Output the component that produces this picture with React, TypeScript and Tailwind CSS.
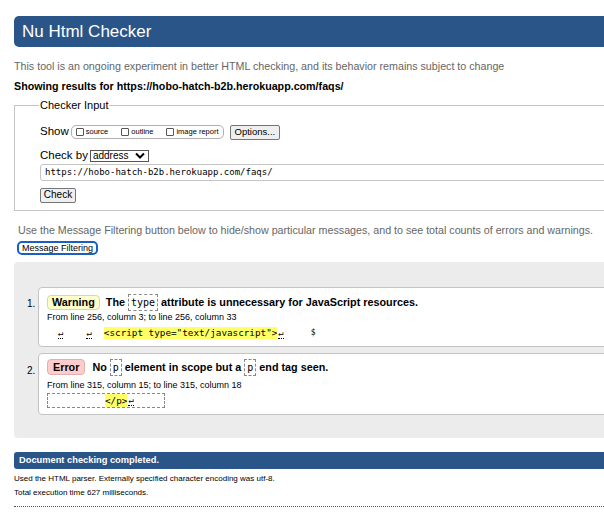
import React from "react";

const Ret = () => (
  <span className="inline-block border-b border-dotted border-black leading-[10px] text-[9px] mx-[1px]">↵</span>
);

const mono = { fontFamily: '"DejaVu Sans Mono", monospace' };

export default function App() {
  return (
    <div className="w-[604px] h-[513px] overflow-hidden bg-white" style={{ fontFamily: '"Liberation Sans", Arial, sans-serif' }}>
      <div className="w-[660px] pl-[14px] pt-[16px]">
        {/* Header */}
        <div className="h-[31px] bg-[#2a5589] rounded-l-[5px] flex items-center pl-[8px]">
          <h1 className="text-white text-[17px] leading-none">Nu Html Checker</h1>
        </div>

        <p className="mt-[12px] text-[10.7px] leading-[14px] text-[#666]">
          This tool is an ongoing experiment in better HTML checking, and its behavior remains subject to change
        </p>
        <p className="mt-[6px] text-[10.7px] leading-[14px] font-bold text-black">
          Showing results for https://hobo-hatch-b2b.herokuapp.com/faqs/
        </p>

        {/* Fieldset */}
        <fieldset className="mt-[5px] border border-[#c4c4c4] pl-[25px] pb-[12px] pt-[2px] h-[113px]">
          <legend className="text-[11px] leading-[14px] px-[1px] ml-[-1px] text-black">Checker Input</legend>
          <div className="flex items-center mt-[10px] h-[16px]">
            <span className="text-[11.5px] text-black">Show</span>
            <div className="ml-[2px] flex items-center h-[14px] border border-[#b0b0b0] rounded-[5px] px-[4px] gap-[13px] text-[7.5px] text-black">
              <span className="flex items-center gap-[2px]">
                <span className="inline-block w-[8px] h-[8px] border border-[#555] rounded-[1px]" />source
              </span>
              <span className="flex items-center gap-[2px]">
                <span className="inline-block w-[8px] h-[8px] border border-[#555] rounded-[1px]" />outline
              </span>
              <span className="flex items-center gap-[2px]">
                <span className="inline-block w-[8px] h-[8px] border border-[#555] rounded-[1px]" />image report
              </span>
            </div>
            <button className="ml-[6px] h-[15px] px-[4px] text-[9.5px] leading-none border border-[#767676] bg-[#efefef] rounded-[2px] text-black">
              Options...
            </button>
          </div>
          <div className="flex items-center mt-[9px] h-[13px]">
            <span className="text-[11.5px] text-black">Check by</span>
            <div className="ml-[2px] w-[59px] h-[12px] border border-[#555] flex items-center justify-between pl-[2px] pr-[3px] text-[10px] leading-none text-black">
              address
              <svg width="10" height="7" viewBox="0 0 10 7">
                <path d="M1 1.5 L5 5.5 L9 1.5" fill="none" stroke="black" strokeWidth="2" />
              </svg>
            </div>
          </div>
          <div className="mt-[2px] h-[17px] border border-[#c4c4c4] rounded-l-[3px] flex items-center pl-[4px] text-[9px] text-black" style={mono}>
            https://hobo-hatch-b2b.herokuapp.com/faqs/
          </div>
          <button className="mt-[3px] h-[15px] w-[36px] text-[10px] leading-none border border-[#767676] bg-[#efefef] rounded-[2px] text-black">
            Check
          </button>
        </fieldset>

        <p className="mt-[12px] ml-[4px] text-[10.7px] leading-[14px] text-[#666]">
          Use the Message Filtering button below to hide/show particular messages, and to see total counts of errors and warnings.
        </p>
        <button className="block mt-[4px] ml-[3px] h-[14px] px-[3px] text-[9px] leading-none border-2 border-[#1a5fc8] rounded-[5px] bg-white text-black">
          Message Filtering
        </button>

        {/* Results */}
        <div className="mt-[7px] h-[176px] bg-[#ececec] rounded-l-[4px] pt-[25px]">
          <ol className="pl-[13px]">
            <li className="flex">
              <span className="w-[11px] text-[10px] pt-[9px] text-black">1.</span>
              <div className="flex-1 h-[60px] bg-white border border-[#c4c4c4] rounded-l-[4px] pl-[8px] pt-[6px]">
                <div className="flex items-center h-[16px] text-[10.8px] font-bold text-black">
                  <span className="h-[15px] px-[4px] flex items-center bg-[#ffffcc] border border-[#d8d8a0] rounded-[4px]">Warning</span>
                  <span className="ml-[6px]">The</span>
                  <code className="mx-[3px] px-[2px] border border-dashed border-[#888] font-normal text-[10px] leading-[15px]" style={mono}>type</code>
                  <span>attribute is unnecessary for JavaScript resources.</span>
                </div>
                <p className="mt-[2px] text-[9px] leading-[11px] text-black">From line 256, column 3; to line 256, column 33</p>
                <div className="mt-[4px] flex items-center text-[9.3px] leading-[12px] text-black" style={mono}>
                  <span className="ml-[10px]"><Ret /></span>
                  <span className="ml-[21px]"><Ret /></span>
                  <span className="ml-[11px] bg-[#ffff66]">&lt;script type="text/javascript"&gt;</span>
                  <Ret />
                  <span className="ml-[26px] text-[8px]">$</span>
                </div>
              </div>
            </li>
            <li className="flex mt-[6px]">
              <span className="w-[11px] text-[10px] pt-[10px] text-black">2.</span>
              <div className="flex-1 h-[62px] bg-white border border-[#c4c4c4] rounded-l-[4px] pl-[8px] pt-[5px]">
                <div className="flex items-center h-[16px] text-[10.8px] font-bold text-black">
                  <span className="h-[16px] px-[5px] flex items-center bg-[#ffcccc] border border-[#e0b0b0] rounded-[4px]">Error</span>
                  <span className="ml-[7px]">No</span>
                  <code className="mx-[3px] px-[2px] border border-dashed border-[#888] font-normal text-[10px] leading-[15px]" style={mono}>p</code>
                  <span>element in scope but a</span>
                  <code className="mx-[3px] px-[2px] border border-dashed border-[#888] font-normal text-[10px] leading-[15px]" style={mono}>p</code>
                  <span>end tag seen.</span>
                </div>
                <p className="mt-[5px] text-[9px] leading-[11px] text-black">From line 315, column 15; to line 315, column 18</p>
                <div className="mt-[2px] w-[118px] h-[15px] border border-dashed border-[#888] flex items-center text-[9.3px] text-black" style={mono}>
                  <span className="ml-[57px] bg-[#ffff66]">&lt;/p&gt;</span>
                  <Ret />
                </div>
              </div>
            </li>
          </ol>
        </div>

        <div className="mt-[14px] h-[17px] bg-[#2a5589] rounded-l-[3px] flex items-center pl-[5px]">
          <span className="text-white text-[9.3px] font-bold">Document checking completed.</span>
        </div>
        <p className="mt-[5px] text-[8px] leading-[10px] text-black">Used the HTML parser. Externally specified character encoding was utf-8.</p>
        <p className="mt-[4px] text-[8px] leading-[10px] text-black">Total execution time 627 milliseconds.</p>
        <div className="mt-[8px] border-t border-dotted border-[#555]" />
      </div>
    </div>
  );
}
